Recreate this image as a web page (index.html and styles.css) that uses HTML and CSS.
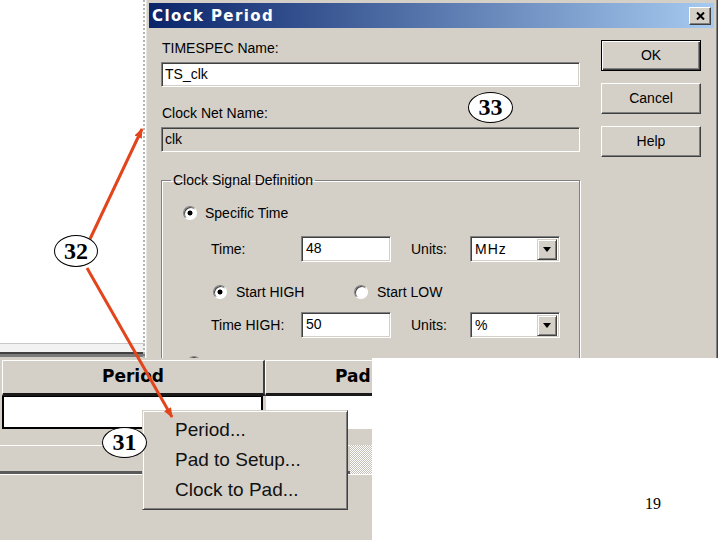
FILE: index.html
```html
<!DOCTYPE html>
<html>
<head>
 <meta charset="utf-8"/>
 <title>Clock Period</title>
 <link rel="stylesheet" href="styles.css">
</head>
<body>
<div class="slide">

<!-- window behind the dialog -->
<div class="backwin"></div>

<!-- _______________________________________________________________ -->
<div class="dialog">
 <div class="titlebar">
  <span class="title">Clock Period</span>
  <span class="closebtn">
   <svg width="9" height="8" viewBox="0 0 9 8"><path d="M1 0.5 L8 7.5 M8 0.5 L1 7.5" stroke="#000" stroke-width="2"/></svg>
  </span>
 </div>
 <div class="dlgbody">
  <div class="maincol">
   <p class="lbl">TIMESPEC Name:</p>
   <div class="field">TS_clk</div>
   <p class="lbl">Clock Net Name:</p>
   <div class="field disabled">clk</div>
   <fieldset class="group">
    <legend>Clock Signal Definition</legend>
    <div class="row r1"><span class="radio on"></span>Specific Time</div>
    <div class="row r2">
     <span class="rlbl">Time:</span>
     <span class="field small">48</span>
     <span class="ulbl">Units:</span>
     <span class="combo"><span class="cval">MHz</span><span class="dd"><i class="tri"></i></span></span>
    </div>
    <div class="row r3">
     <span class="ritem"><span class="radio on"></span>Start HIGH</span>
     <span class="ritem"><span class="radio"></span>Start LOW</span>
    </div>
    <div class="row r2 r4">
     <span class="rlbl">Time HIGH:</span>
     <span class="field small">50</span>
     <span class="ulbl">Units:</span>
     <span class="combo"><span class="cval">%</span><span class="dd"><i class="tri"></i></span></span>
    </div>
    <div class="row r5"><span class="radio"></span></div>
   </fieldset>
  </div>
  <div class="btncol">
   <div class="btn def">OK</div>
   <div class="btn">Cancel</div>
   <div class="btn">Help</div>
  </div>
 </div>
</div>

<!-- _______________________________________________________________ -->
<div class="grid">
 <div class="ghead">
  <div class="hcell period">Period</div>
  <div class="hcell pad">Pad</div>
 </div>
 <div class="grow">
  <div class="gcell sel"></div>
  <div class="gcell"></div>
 </div>
 <div class="gspace"></div>
 <div class="hscroll"><div class="thumb"></div><div class="track"></div></div>
 <div class="grest"></div>
</div>

<div class="menu">
 <div class="mitem">Period...</div>
 <div class="mitem">Pad to Setup...</div>
 <div class="mitem">Clock to Pad...</div>
</div>

<!-- _______________________________________________________________ -->
<svg class="arrows" width="720" height="540" viewBox="0 0 720 540">
 <defs>
  <marker id="head" markerWidth="10" markerHeight="8" refX="9" refY="4" orient="auto" markerUnits="userSpaceOnUse">
   <path d="M0 0 L10 4 L0 8 Z" fill="#e2441c"/>
  </marker>
 </defs>
 <line x1="90" y1="239" x2="142" y2="129" stroke="#e2441c" stroke-width="3" marker-end="url(#head)"/>
 <line x1="87" y1="268" x2="172" y2="417" stroke="#e2441c" stroke-width="3" marker-end="url(#head)"/>
</svg>

<div class="callout c33">33</div>
<div class="callout c32">32</div>
<div class="callout c31">31</div>

<div class="pagenum">19</div>

</div>
</body>
</html>
```

FILE: styles.css
```css
body {
 margin: 0;
 background: #fff;
 font-family: "Liberation Sans", Arial, sans-serif;
 color: #000; }
p { margin: 0; }

.slide {
 position: relative;
 width: 720px;
 height: 540px;
 overflow: hidden;
 background: #fff;
}

.backwin {
 position: absolute;
 left: 0;
 top: 0;
 width: 143px;
 height: 358px;
 border-right: 2px dotted #b4b4b4;
 background: linear-gradient(to bottom, #fff 0 343px, #c8c8c8 343px 344px, #f2f2f2 344px 352px,
   #404040 352px 354px, #7a7a7a 354px 357px, #d4d0c8 357px);
}

/* ---- dialog ---- */
.dialog {
 position: absolute;
 left: 146px;
 top: 0;
 width: 572px;
 height: 358px;
 box-sizing: border-box;
 padding: 3px 3px 0 2px;
 background: #d4d0c8;
 border-left: 1px solid #e6e4de;
 border-right: 1px solid #404040;
 box-shadow: inset -1px 0 #808080;
 overflow: hidden;
}
.titlebar {
 height: 25px;
 display: flex;
 align-items: center;
 justify-content: space-between;
 padding: 0 3px 0 3px;
 background: linear-gradient(to right, #0a246a, #a6caf0);
}
.title {
 color: #fff;
 font-family: "DejaVu Sans", sans-serif;
 font-weight: bold;
 font-size: 15px;
 letter-spacing: 1.4px;
}
.closebtn {
 width: 22px;
 height: 18px;
 box-sizing: border-box;
 display: flex;
 align-items: center;
 justify-content: center;
 background: #d4d0c8;
 border: 1px solid;
 border-color: #fff #404040 #404040 #fff;
 box-shadow: inset -1px -1px #808080;
}

.dlgbody {
 display: flex;
 padding: 11px 0 0 12px;
 font-size: 14px;
}
.maincol { width: 419px; }
.lbl {
 height: 18px;
 line-height: 18px;
 margin: 0 0 5px 1px;
}
.field {
 display: block;
 height: 25px;
 box-sizing: border-box;
 background: #fff;
 border: 1px solid;
 border-color: #808080 #fff #fff #808080;
 box-shadow: inset 1px 1px #404040, inset -1px -1px #d4d0c8;
 padding-left: 3px;
 line-height: 23px;
 margin-bottom: 17px;
}
.field.disabled {
 background: #d4d0c8;
 margin-bottom: 0;
}

.group {
 width: 419px;
 height: 230px;
 box-sizing: border-box;
 margin: 19px 0 0 0;
 padding: 0 0 0 9px;
 min-width: 0;
 border: 1px solid #808080;
 box-shadow: inset 1px 1px #fff, 1px 1px #fff;
}
.group legend {
 padding: 0 2px;
 line-height: 18px;
}
.row {
 display: flex;
 align-items: center;
 height: 24px;
}
.r1 { margin-top: 12px; padding-left: 12px; }
.r2 { margin-top: 11px; height: 26px; padding-left: 40px; }
.r3 { margin-top: 18px; padding-left: 42px; }
.r4 { margin-top: 8px; }
.r5 { margin-top: 13px; padding-left: 16px; }

.radio {
 width: 14px;
 height: 14px;
 box-sizing: border-box;
 border-radius: 50%;
 border: 1px solid;
 border-color: #808080 #fff #fff #808080;
 box-shadow: inset 1px 1px #404040;
 background: #fff;
 margin-right: 8px;
 flex: none;
}
.radio.on { background: radial-gradient(circle, #000 0 2.2px, #fff 2.8px); }
.r3 .radio { margin-right: 9px; }
.ritem { display: flex; align-items: center; width: 141px; }

.rlbl { width: 90px; }
.field.small {
 width: 90px;
 height: 26px;
 margin: 0;
 padding-left: 4px;
 line-height: 22px;
}
.ulbl { width: 59px; margin-left: 20px; }
.combo {
 width: 90px;
 height: 26px;
 box-sizing: border-box;
 display: flex;
 align-items: center;
 background: #fff;
 border: 1px solid;
 border-color: #808080 #fff #fff #808080;
 box-shadow: inset 1px 1px #404040, inset -1px -1px #d4d0c8;
 padding: 2px 2px 2px 4px;
 letter-spacing: 1px;
}
.cval { flex: 1; }
.dd {
 width: 20px;
 height: 21px;
 box-sizing: border-box;
 display: flex;
 align-items: center;
 justify-content: center;
 background: #d4d0c8;
 border: 1px solid;
 border-color: #d4d0c8 #404040 #404040 #d4d0c8;
 box-shadow: inset 1px 1px #fff, inset -1px -1px #808080;
}
.tri {
 width: 0;
 height: 0;
 border-left: 4px solid transparent;
 border-right: 4px solid transparent;
 border-top: 5px solid #000;
}

.btncol {
 margin: 1px 0 0 21px;
 display: flex;
 flex-direction: column;
 gap: 12px;
}
.btn {
 width: 100px;
 height: 31px;
 box-sizing: border-box;
 background: #d4d0c8;
 border: 1px solid;
 border-color: #fff #404040 #404040 #fff;
 box-shadow: inset -1px -1px #808080;
 text-align: center;
 line-height: 28px;
}
.btn.def {
 border-color: #000;
 box-shadow: inset 1px 1px #fff, inset -1px -1px #404040, inset -2px -2px #808080;
}

/* ---- table below ---- */
.grid {
 position: absolute;
 left: 0;
 top: 358px;
 width: 372px;
 height: 182px;
 overflow: hidden;
 background: #d4d0c8;
}
.ghead {
 display: flex;
 margin-top: 2px;
 padding-left: 2px;
 height: 36px;
}
.hcell {
 height: 36px;
 box-sizing: border-box;
 border-top: 1px solid #fff;
 border-left: 1px solid #fff;
 border-bottom: 3px solid #1a1a1a;
 border-right: 2px solid #404040;
 font-family: "DejaVu Sans", sans-serif;
 font-weight: bold;
 font-size: 17px;
 line-height: 31px;
 white-space: nowrap;
 flex: none;
}
.period { width: 263px; text-align: center; }
.pad { width: 300px; padding-left: 69px; }
.grow {
 display: flex;
 height: 34px;
 padding-left: 2px;
}
.gcell { background: #fff; height: 33px; box-sizing: border-box; flex: 1; margin-left: 3px; }
.gcell.sel {
 flex: none;
 width: 261px;
 margin-left: 0;
 border: 2px solid #000;
 border-top-width: 1px;
}
.gspace { height: 15px; }
.hscroll { display: flex; height: 29px; }
.thumb {
 width: 350px;
 box-sizing: border-box;
 border-top: 1px solid #fff;
 border-bottom: 3px solid #5a5a5a;
 background: #d4d0c8;
}
.track {
 flex: 1;
 background: repeating-conic-gradient(#fff 0 25%, #c4c0b8 0 50%) 0 0 / 2px 2px;
}
.grest { height: 70px; border-top: 1px solid #fff; }

.menu {
 position: absolute;
 left: 142px;
 top: 410px;
 width: 206px;
 height: 100px;
 box-sizing: border-box;
 padding: 4px 0 0 32px;
 background: #d4d0c8;
 border: 1px solid;
 border-color: #d4d0c8 #404040 #404040 #d4d0c8;
 box-shadow: inset 1px 1px #fff, inset -1px -1px #808080;
}
.mitem {
 height: 30px;
 line-height: 30px;
 font-size: 19px;
 color: #111;
}

/* ---- annotations ---- */
.arrows {
 position: absolute;
 left: 0;
 top: 0;
 pointer-events: none;
}
.callout {
 position: absolute;
 width: 45px;
 height: 31px;
 box-sizing: border-box;
 border: 1px solid #000;
 border-radius: 50%;
 background: #fff;
 display: flex;
 align-items: center;
 justify-content: center;
 font-family: "Liberation Serif", serif;
 font-weight: bold;
 font-size: 24px;
}
.c33 { left: 468px; top: 92px; }
.c32 { left: 54px; top: 235px; width: 44px; height: 32px; }
.c31 { left: 102px; top: 427px; }

.pagenum {
 position: absolute;
 left: 645px;
 top: 495px;
 font-family: "Liberation Serif", serif;
 font-size: 16px;
}
```
